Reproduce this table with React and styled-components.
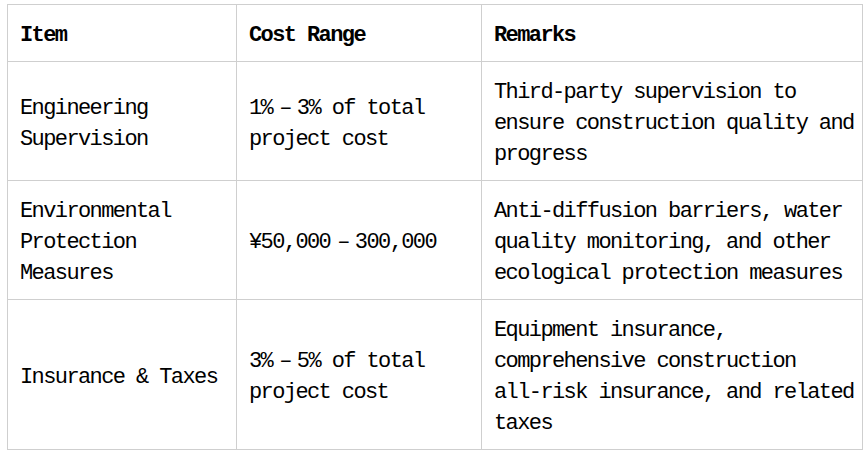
import React from 'react';
import styled, { createGlobalStyle } from 'styled-components';

const GlobalStyle = createGlobalStyle`
  body {
    margin: 0;
    background: #fff;
  }
`;

const Page = styled.div`
  padding: 4px 0 0 7px;
`;

const Table = styled.table`
  border-collapse: collapse;
  table-layout: fixed;
  width: 855px;
  font-family: 'Liberation Mono', 'DejaVu Sans Mono', monospace;
  font-size: 22px;
  letter-spacing: -1.6px;
  line-height: 31px;
  color: #000;
`;

const Col = styled.col`
  width: ${p => p.w}px;
`;

const Cell = styled.td`
  border: 1px solid #cfcfcf;
  padding: 15px ${p => (p.tight ? 6 : 12)}px 10px 12px;
  vertical-align: middle;
  text-align: left;
`;

const HeadCell = styled(Cell).attrs({ as: 'th' })`
  font-weight: bold;
`;

const Dash = styled.span`
  margin: 0 6px 0 7px;
`;

// keeps a phrase on one line (ranges, hyphenated words)
const Keep = styled.span`
  white-space: nowrap;
`;

const rows = [
  {
    item: 'Engineering Supervision',
    cost: (
      <>
        <Keep>
          1%<Dash>–</Dash>3% of total
        </Keep>{' '}
        project cost
      </>
    ),
    remarks: 'Third-party supervision to ensure construction quality and progress'
  },
  {
    item: 'Environmental Protection Measures',
    cost: (
      <Keep>
        ¥50,000<Dash>–</Dash>300,000
      </Keep>
    ),
    remarks:
      'Anti-diffusion barriers, water quality monitoring, and other ecological protection measures'
  },
  {
    item: 'Insurance & Taxes',
    cost: (
      <>
        <Keep>
          3%<Dash>–</Dash>5% of total
        </Keep>{' '}
        project cost
      </>
    ),
    remarks: (
      <>
        Equipment insurance, comprehensive construction{' '}
        <Keep>all-risk insurance, and related</Keep> taxes
      </>
    )
  }
];

const App = () => {
  return (
    <Page>
      <GlobalStyle />
      <Table>
        <colgroup>
          <Col w={229} />
          <Col w={245} />
          <Col w={381} />
        </colgroup>
        <thead>
          <tr>
            <HeadCell>Item</HeadCell>
            <HeadCell>Cost Range</HeadCell>
            <HeadCell tight>Remarks</HeadCell>
          </tr>
        </thead>
        <tbody>
          {rows.map((row, i) => (
            <tr key={i}>
              <Cell>{row.item}</Cell>
              <Cell>{row.cost}</Cell>
              <Cell tight>{row.remarks}</Cell>
            </tr>
          ))}
        </tbody>
      </Table>
    </Page>
  );
};

export default App;
